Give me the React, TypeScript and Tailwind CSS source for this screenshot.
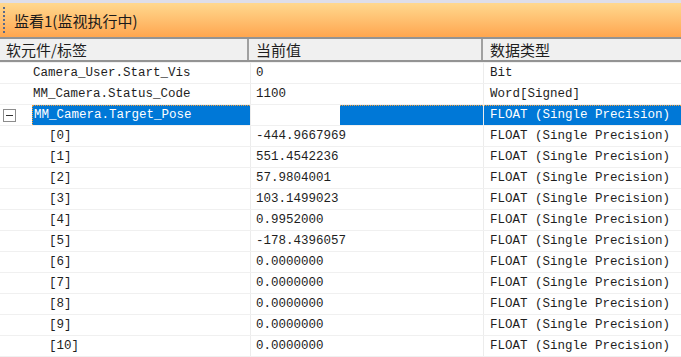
const cjk = { fontFamily: '"Noto Sans CJK SC", "Noto Sans", sans-serif' }
const mono = { fontFamily: '"Liberation Mono", "DejaVu Sans Mono", monospace' }

type Row = { label: string; value: string; type: string; child?: boolean; selected?: boolean; expander?: boolean }

const values = [
  '-444.9667969',
  '551.4542236',
  '57.9804001',
  '103.1499023',
  '0.9952000',
  '-178.4396057',
  '0.0000000',
  '0.0000000',
  '0.0000000',
  '0.0000000',
  '0.0000000',
]

const rows: Row[] = [
  { label: 'Camera_User.Start_Vis', value: '0', type: 'Bit' },
  { label: 'MM_Camera.Status_Code', value: '1100', type: 'Word[Signed]' },
  { label: 'MM_Camera.Target_Pose', value: '', type: 'FLOAT (Single Precision)', selected: true, expander: true },
  ...values.map((v, i) => ({ label: `[${i}]`, value: v, type: 'FLOAT (Single Precision)', child: true })),
]

function Grip() {
  return (
    <div className="flex w-[3px] flex-col gap-[2px] ml-[3px]">
      {Array.from({ length: 7 }).map((_, i) => (
        <div key={i} className="h-[2px] w-[2px] bg-[#5a6a8a]" />
      ))}
    </div>
  )
}

function Expander() {
  return (
    <div className="absolute left-[3px] top-[4px] flex h-[13px] w-[13px] items-center justify-center border border-[#8c8c8c] bg-white">
      <div className="h-[1px] w-[7px] bg-[#333]" />
    </div>
  )
}

export default function App() {
  return (
    <div className="h-[357px] w-[681px] overflow-hidden bg-white text-[#1e1e1e]">
      <div className="h-[3px] bg-[#dedee8]" />
      <div className="flex h-[34px] items-center bg-gradient-to-b from-[#ffd88e] to-[#ffa64e]">
        <Grip />
        <span className="ml-[8px] text-[15px] leading-none text-[#1a1a1a]" style={cjk}>
          监看1(监视执行中)
        </span>
      </div>
      <div className="flex h-[25px] border-y-2 border-[#939393] bg-[#f0f0f0] text-[15px] leading-none" style={cjk}>
        <div className="flex w-[249px] items-center border-r-2 border-[#a0a0a0] pl-[6px]">软元件/标签</div>
        <div className="flex w-[234px] items-center border-r-2 border-[#a0a0a0] pl-[7px]">当前值</div>
        <div className="flex flex-1 items-center pl-[7px]">数据类型</div>
      </div>
      <div className="h-[1px] bg-[#f0f0f0]" />
      <div className="text-[12.5px] leading-none" style={mono}>
        {rows.map((r) => (
          <div key={r.label} className="relative flex h-[21px] border-b border-[#f0f0f0]">
            {r.expander && <Expander />}
            <div className="flex w-[251px] border-r border-[#ececec]">
              <div
                className={
                  r.selected
                    ? 'ml-[32px] flex flex-1 items-center border-t border-l border-dotted border-[#f0a040] bg-[#0078d7] pl-[1px] text-white'
                    : r.child
                      ? 'flex flex-1 items-center pl-[49px]'
                      : 'flex flex-1 items-center pl-[33px]'
                }
              >
                {r.label}
              </div>
            </div>
            <div className="flex w-[233px] border-r border-[#ececec]">
              {r.selected ? (
                <>
                  <div className="w-[89px]" />
                  <div className="flex-1 border-t border-dotted border-[#f0a040] bg-[#0078d7]" />
                </>
              ) : (
                <div className="flex flex-1 items-center pl-[5px]">{r.value}</div>
              )}
            </div>
            <div
              className={
                r.selected
                  ? 'flex flex-1 items-center border-t border-dotted border-[#f0a040] bg-[#0078d7] pl-[6px] text-white'
                  : 'flex flex-1 items-center pl-[6px]'
              }
            >
              {r.type}
            </div>
          </div>
        ))}
      </div>
    </div>
  )
}
